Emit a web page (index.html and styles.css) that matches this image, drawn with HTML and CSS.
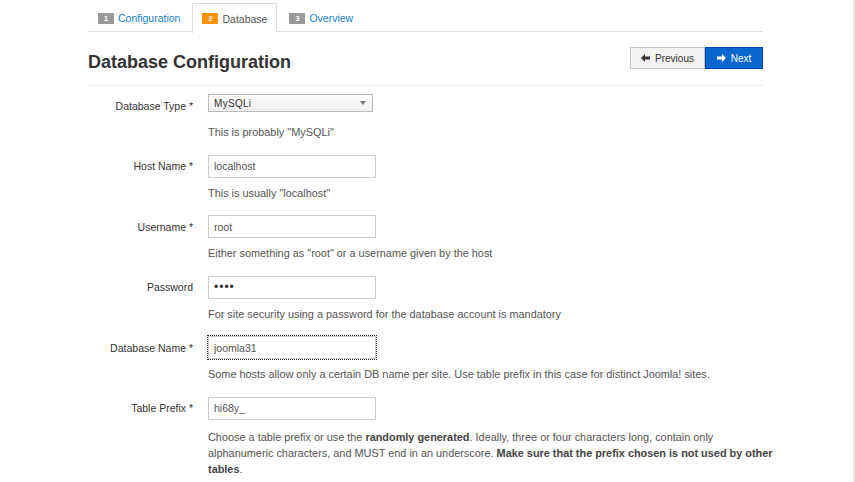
FILE: index.html
```html
<!DOCTYPE html>
<html lang="en">
<head>
<meta charset="utf-8">
<title>Database Configuration</title>
<link rel="stylesheet" href="styles.css">
</head>
<body>
<div class="page">
  <div class="wrap">
    <ul class="tabs">
      <li class="tab"><span class="badge">1</span><a href="#">Configuration</a></li>
      <li class="tab active"><span class="badge orange">2</span><span class="cur">Database</span></li>
      <li class="tab"><span class="badge">3</span><a href="#">Overview</a></li>
    </ul>

    <div class="head">
      <h1>Database Configuration</h1>
      <div class="btns">
        <button class="btn prev"><svg width="9" height="8" viewBox="0 0 9 8"><path d="M0 4 L4 0 L4 2.5 L9 2.5 L9 5.5 L4 5.5 L4 8 Z" fill="#333"/></svg>Previous</button>
        <button class="btn next"><svg width="9" height="8" viewBox="0 0 9 8"><path d="M9 4 L5 0 L5 2.5 L0 2.5 L0 5.5 L5 5.5 L5 8 Z" fill="#fff"/></svg>Next</button>
      </div>
    </div>

    <form class="form">
      <div class="group first">
        <label class="lbl">Database Type *</label>
        <div class="ctl"><div class="select"><span>MySQLi</span><i class="caret"></i></div></div>
        <p class="help">This is probably "MySQLi"</p>
      </div>
      <div class="group">
        <label class="lbl">Host Name *</label>
        <div class="ctl"><input class="inp" type="text" value="localhost"></div>
        <p class="help">This is usually "localhost"</p>
      </div>
      <div class="group">
        <label class="lbl">Username *</label>
        <div class="ctl"><input class="inp" type="text" value="root"></div>
        <p class="help">Either something as "root" or a username given by the host</p>
      </div>
      <div class="group">
        <label class="lbl">Password</label>
        <div class="ctl"><input class="inp pw" type="password" value="root"></div>
        <p class="help">For site security using a password for the database account is mandatory</p>
      </div>
      <div class="group">
        <label class="lbl">Database Name *</label>
        <div class="ctl"><input class="inp focus" type="text" value="joomla31"></div>
        <p class="help">Some hosts allow only a certain DB name per site. Use table prefix in this case for distinct Joomla! sites.</p>
      </div>
      <div class="group last">
        <label class="lbl">Table Prefix *</label>
        <div class="ctl"><input class="inp" type="text" value="hi68y_"></div>
        <p class="help">Choose a table prefix or use the <b>randomly generated</b>. Ideally, three or four characters long, contain only alphanumeric characters, and MUST end in an underscore. <b>Make sure that the prefix chosen is not used by other tables</b>.</p>
      </div>
    </form>
  </div>
</div>
<div class="edge"></div>
</body>
</html>
```
FILE: styles.css
```css
html, body {
  margin: 0;
  padding: 0;
  height: 482px;
  overflow: hidden;
  background: #fff;
}
body {
  display: flex;
  font-family: "Liberation Sans", Arial, sans-serif;
  color: #333;
}
.page {
  flex: 1;
}
.edge {
  width: 2px;
  background: #ebebe6;
}
.wrap {
  margin-left: 88px;
  width: 675px;
}
.tabs {
  list-style: none;
  margin: 0;
  padding: 3px 0 0 0;
  display: flex;
  border-bottom: 1px solid #ddd;
  height: 28px;
}
.tab {
  display: flex;
  align-items: center;
  height: 28px;
  padding: 0 9px;
  margin-right: 2px;
  border: 1px solid transparent;
  border-bottom: none;
  font-size: 10.5px;
  margin-bottom: -1px;
}
.tab.active {
  border-color: #ddd;
  background: #fff;
  height: 29px;
}
.tab a {
  color: #1a7fd0;
  text-decoration: none;
}
.cur {
  color: #555;
}
.badge {
  display: inline-block;
  width: 16px;
  height: 11px;
  line-height: 11px;
  background: #999;
  color: #fff;
  font-size: 8px;
  font-weight: bold;
  text-align: center;
  margin-right: 4px;
}
.badge.orange {
  background: #f89406;
}
.head {
  display: flex;
  align-items: flex-start;
  justify-content: space-between;
  height: 53px;
  border-bottom: 1px solid #eee;
}
h1 {
  margin: 19px 0 0 0;
  font-size: 18px;
  line-height: 22px;
  font-weight: bold;
  color: #333;
}
.btns {
  display: flex;
  margin-top: 15px;
}
.btn {
  font-family: "Liberation Sans", Arial, sans-serif;
  font-size: 10px;
  height: 22px;
  display: flex;
  align-items: center;
  justify-content: center;
  gap: 5px;
  padding: 0;
  border: 1px solid #c5c5c5;
  background: #f3f3f3;
  color: #333;
  margin: 0;
}
.btn.prev {
  width: 75px;
}
.btn.next {
  width: 58px;
  background: #0866cc;
  border-color: #0447b8;
  color: #fff;
}
.form {
  padding-top: 8px;
}
.group {
  display: grid;
  grid-template-columns: 105px 567px;
  column-gap: 15px;
  align-items: center;
  margin-bottom: 14.5px;
}
.lbl {
  text-align: right;
  font-size: 10.5px;
  color: #333;
}
.ctl {
  height: 23px;
  display: flex;
  align-items: center;
}
.group.first .ctl {
  align-items: flex-start;
}
.select {
  box-sizing: border-box;
  width: 165px;
  height: 18px;
  border: 1px solid #bbb;
  background: linear-gradient(#fdfdfd, #efefef);
  display: flex;
  align-items: center;
  justify-content: space-between;
  padding: 0 6px 0 5px;
  font-size: 10px;
  letter-spacing: 0.3px;
  color: #333;
}
.caret {
  width: 0;
  height: 0;
  border-left: 3.5px solid transparent;
  border-right: 3.5px solid transparent;
  border-top: 4px solid #777;
}
.inp {
  box-sizing: border-box;
  width: 168px;
  height: 23px;
  border: 1px solid #ccc;
  padding: 0 5px;
  font-family: "Liberation Sans", Arial, sans-serif;
  font-size: 10.5px;
  color: #555;
  margin: 0;
  background: #fff;
  outline: none;
}
.inp.pw {
  font-size: 12px;
  color: #333;
  letter-spacing: 1px;
}
.inp.focus {
  outline: 1px dotted #222;
  outline-offset: 0;
}
.help {
  grid-column: 2 / span 1;
  margin: 7px 0 0 0;
  font-size: 10.9px;
  line-height: 16px;
  color: #555;
}
.group.last .help {
  margin-top: 9px;
}
.help b {
  color: #444;
}
```
